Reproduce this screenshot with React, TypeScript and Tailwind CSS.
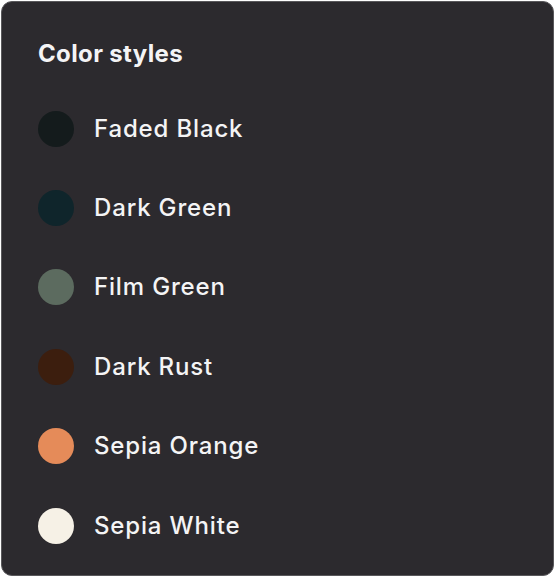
const STYLES = [
  { name: "Faded Black", color: "#141b1c" },
  { name: "Dark Green", color: "#0f252b" },
  { name: "Film Green", color: "#5c6b5f" },
  { name: "Dark Rust", color: "#3c1e0e" },
  { name: "Sepia Orange", color: "#e58b59" },
  { name: "Sepia White", color: "#f6f1e6" },
];

export default function App() {
  return (
    <div className="h-[577px] w-[555px] bg-white p-px" style={{ fontFamily: "Inter, 'Noto Sans', sans-serif" }}>
      <div className="h-full w-full rounded-[11px] border border-[#59585b] bg-[#2c2a2e] pl-[36px] pt-[38px]">
        <h2 className="text-[24px] font-bold leading-[28px] tracking-[0.015em] text-[#f4f4f5]">Color styles</h2>
        <ul className="mt-[21px]">
          {STYLES.map((s) => (
            <li key={s.name} className="flex h-[79.4px] items-center gap-[20px]">
              <span className="h-[36px] w-[36px] shrink-0 rounded-full" style={{ background: s.color }} />
              <span className="text-[24px] font-medium leading-[28px] tracking-[0.035em] text-[#f4f4f5]">{s.name}</span>
            </li>
          ))}
        </ul>
      </div>
    </div>
  );
}
